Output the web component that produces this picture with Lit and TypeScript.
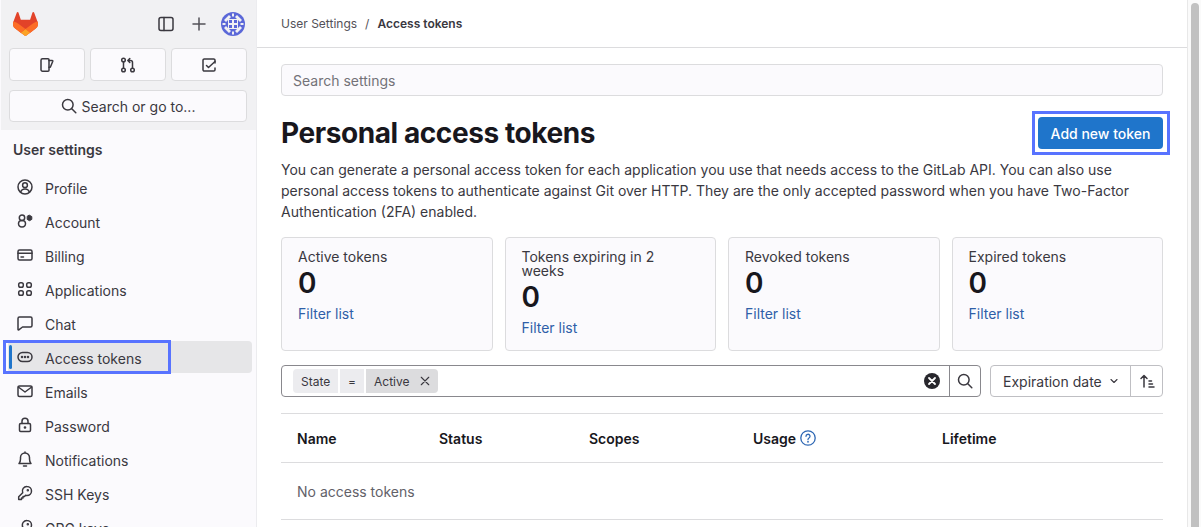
import { LitElement, html, css, svg } from "lit";
import { customElement } from "lit/decorators.js";

const ic = (c: unknown, size = 16) => html`<svg class="ic" width=${size} height=${size} viewBox="0 0 16 16" fill="none" stroke="currentColor" stroke-width="1.5" stroke-linecap="round" stroke-linejoin="round">${c}</svg>`;

const icons: Record<string, unknown> = {
  profile: svg`<circle cx="8" cy="8" r="7"/><circle cx="8" cy="6.2" r="2.4"/><path d="M3.6 13c.7-2 2.4-3 4.4-3s3.700 1 4.400 3"/>`,
  account: svg`<circle cx="5" cy="4.700" r="2.700"/><path d="M5 7.400c2.200 0 3.500 1.300 3.500 3.200S7.200 14 5 14s-3.500-1.500-3.500-3.400S2.800 7.400 5 7.400z"/><path d="M12.500 2.300l2.300 1.300v2.800l-2.300 1.300-2.300-1.300V3.600z" fill="currentColor" stroke-width="1"/>`,
  billing: svg`<rect x="1" y="3" width="14" height="10" rx="1.500"/><path d="M1 6.200h14M4 10h2.500"/>`,
  apps: svg`<rect x="1.700" y="1.700" width="4.600" height="4.600" rx="1.800"/><rect x="9.700" y="1.700" width="4.600" height="4.600" rx="1.800"/><rect x="1.700" y="9.700" width="4.600" height="4.600" rx="1.800"/><rect x="9.700" y="9.700" width="4.600" height="4.600" rx="1.800"/>`,
  chat: svg`<path d="M2.500 2h11A1.500 1.500 0 0 1 15 3.500v7a1.500 1.500 0 0 1-1.500 1.500H5.500L1.800 14.800a.5.5 0 0 1-.8-.4V3.500A1.500 1.500 0 0 1 2.500 2z"/>`,
  token: svg`<rect x="1" y="3.500" width="14" height="9" rx="4.500"/><circle cx="5" cy="8" r=".5" fill="currentColor"/><circle cx="8" cy="8" r=".5" fill="currentColor"/><circle cx="11" cy="8" r=".5" fill="currentColor"/>`,
  mail: svg`<rect x="1" y="3" width="14" height="10.500" rx="1.500"/><path d="M1.300 4l6.700 5 6.700-5"/>`,
  lock: svg`<rect x="2.500" y="6.500" width="11" height="8" rx="1.200"/><path d="M5 6.500V4.300a3 3 0 0 1 6 0v2.200"/><circle cx="8" cy="10.500" r=".6" fill="currentColor"/>`,
  bell: svg`<path d="M2 12.500h12c-1.200-1-1.500-2.300-1.500-4.500V6.500a4.500 4.500 0 0 0-9 0V8c0 2.200-.3 3.500-1.500 4.500zM6.500 15h3M8 1v1"/>`,
  key: svg`<path d="M10 1.500a4.500 4.500 0 0 1 0 9c-.5 0-1-.1-1.400-.2L7.500 11.500H6V13H4.500v1.500H1.700v-2.800l4-4A4.500 4.500 0 0 1 10 1.500z"/><circle cx="10.800" cy="5.200" r=".5" fill="currentColor"/>`,
  search: svg`<circle cx="6.800" cy="6.800" r="5.300"/><path d="M10.800 10.800l4 4"/>`,
  issues: svg`<path d="M3.500 1.800h5.500a1 1 0 0 1 1 1v10.400a1 1 0 0 1-1 1H3.500A1.500 1.500 0 0 1 2 12.700V3.300a1.500 1.500 0 0 1 1.500-1.500z"/><path d="M10 3.500h3.200a.6.600 0 0 1 .6.800L11.300 10.300H10"/>`,
  mr: svg`<circle cx="3.500" cy="3" r="1.800"/><circle cx="3.500" cy="13" r="1.800"/><circle cx="12.500" cy="13" r="1.800"/><path d="M3.500 4.800v6.400M12.500 11.200V5.500A2 2 0 0 0 10.500 3.500H8M9.800 1.500L7.800 3.500l2 2"/>`,
  todo: svg`<path d="M14 6V3.300A1.300 1.300 0 0 0 12.700 2H3.300A1.300 1.300 0 0 0 2 3.300v9.400A1.300 1.300 0 0 0 3.300 14h9.400a1.300 1.300 0 0 0 1.300-1.300V11"/><path d="M5.500 8.500l2 2 6.500-6"/>`,
  panel: svg`<rect x="1" y="1.500" width="14" height="13" rx="2"/><path d="M6 1.500v13"/>`,
  plus: svg`<path d="M8 2v12M2 8h12"/>`,
  chevron: svg`<path d="M4 6l4 4 4-4"/>`,
  sort: svg`<path d="M5 14V2.500M2 5.500l3-3 3 3M10 8h2.500M10 11h3.500M10 14h5"/>`,
  close: svg`<path d="M3 3l10 10M13 3L3 13"/>`,
};

const nav = [
  ["profile", "Profile"],
  ["account", "Account"],
  ["billing", "Billing"],
  ["apps", "Applications"],
  ["chat", "Chat"],
  ["token", "Access tokens"],
  ["mail", "Emails"],
  ["lock", "Password"],
  ["bell", "Notifications"],
  ["key", "SSH Keys"],
  ["key", "GPG keys"],
];

const cards = ["Active tokens", "Tokens expiring in 2 weeks", "Revoked tokens", "Expired tokens"];

@customElement("app-root")
export class AppRoot extends LitElement {
  static styles = css`
    :host { display: block; width: 1201px; height: 527px; overflow: hidden; font-family: Inter, "Liberation Sans", sans-serif; font-size: 14px; color: #3a383f; background: #fff; }
    * { box-sizing: border-box; }
    .ic { display: block; flex: none; }
    .app { display: flex; height: 527px; }
    .side { width: 257px; flex: none; height: 527px; overflow: hidden; background: #fbfafd; border-right: 1px solid #ececef; border-left: 1px solid #fbfafd; }
    .top { height: 130px; background: #f1f1f3; padding: 12px 8px 0 8px; margin-right: 0; }
    .brand { display: flex; align-items: center; height: 24px; margin-bottom: 12px; }
    .logo { margin-left: 4px; }
    .brand .ctl { margin-left: auto; display: flex; align-items: center; color: #3a383f; }
    .ctl .plus { margin-left: 17px; color: #535158; }
    .avatar { margin-left: 14px; margin-right: 3px; }
    .btns { display: grid; grid-template-columns: repeat(3, 76px); gap: 5px; }
    .tbtn { height: 33px; border: 1px solid #dcdcde; border-radius: 4px; background: #fbfafd; display: flex; align-items: center; justify-content: center; }
    .find { margin-top: 9px; height: 32px; width: 238px; border: 1px solid #dcdcde; border-radius: 4px; background: #fbfafd; display: flex; align-items: center; justify-content: center; gap: 5px; }
    .ttl { font-weight: 600; height: 41px; padding: 11px 0 0 12px; line-height: 17px; color: #3a383f; }
    .navs { padding: 0 4px 0 7px; display: flex; flex-direction: column; gap: 2px; }
    .item { position: relative; height: 32px; flex: none; display: flex; align-items: center; gap: 12px; padding-left: 9px; border-radius: 4px; }
    .item span { position: relative; top: 1px; }
    .item.on { background: #e6e6e8; }
    .item.on::before { content: ""; position: absolute; left: 1px; top: 4px; width: 3px; height: 24px; border-radius: 2px; background: #1f75cb; }
    .focus { position: absolute; left: -5px; top: -1px; width: 168px; height: 34px; border: 3px solid #5873ff; pointer-events: none; }
    .main { width: 930px; flex: none; height: 527px; overflow: hidden; }
    .crumbs { height: 48px; border-bottom: 1px solid #dcdcde; padding: 0 24px; display: flex; align-items: center; font-size: 12px; gap: 8px; color: #535158; }
    .crumbs b { font-weight: 600; color: #3a383f; }
    .content { padding: 16px 24px 0; }
    .sinput { height: 32px; border: 1px solid #dcdcde; border-radius: 4px; background: #fbfafd; color: #737278; display: flex; align-items: center; padding: 0 11px; }
    .head { display: flex; justify-content: space-between; align-items: center; margin-top: 21px; height: 32px; }
    h1 { margin: 0; font-size: 28px; line-height: 32px; font-weight: 700; color: #18171d; letter-spacing: -0.015em; }
    .add { position: relative; width: 125px; height: 32px; background: #1f75cb; color: #fff; border-radius: 4px; display: flex; align-items: center; justify-content: center; font-weight: 500; }
    .add::after { content: ""; position: absolute; left: -6px; right: -7px; top: -6px; bottom: -6px; border: 3px solid #5873ff; }
    p { margin: 10px 0 15px; line-height: 21px; color: #3a383f; }
    .cards { display: grid; grid-template-columns: repeat(4, 1fr); gap: 12px; height: 112px; }
    .card { border: 1px solid #dcdcde; border-radius: 4px; background: #fbfafd; padding: 12px 16px; }
    .card .t { line-height: 14px; }
    .card .n { font-size: 28px; font-weight: 600; line-height: 38px; color: #18171d; }
    .card a { display: block; line-height: 20px; margin-top: 2px; color: #2f5fa8; }
    .fil { display: flex; margin-top: 16px; height: 32px; }
    .bar { width: 700px; border: 1px solid #89888d; border-radius: 4px; display: flex; align-items: center; padding-left: 11px; }
    .chip { height: 24px; display: flex; align-items: center; background: #ececef; font-size: 12px; margin-right: 2px; padding: 0 8px; }
    .chip.a { border-radius: 4px 0 0 4px; width: 45px; }
    .chip.b { width: 24px; justify-content: center; }
    .chip.c { background: #dcdcde; border-radius: 0 4px 4px 0; width: 72px; gap: 10px; color: #3a383f; }
    .clear { margin-left: auto; margin-right: 9px; }
    .sbtn { width: 31px; height: 100%; border-left: 1px solid #89888d; display: flex; align-items: center; justify-content: center; }
    .sortg { width: 173px; margin-left: 9px; border: 1px solid #bfbfc3; border-radius: 4px; display: flex; align-items: center; }
    .sortg .lbl { width: 140px; height: 100%; border-right: 1px solid #bfbfc3; display: flex; align-items: center; padding-left: 12px; gap: 6px; }
    .sortg .dir { flex: 1; display: flex; align-items: center; justify-content: center; }
    .tbl { margin-top: 16px; border-top: 1px solid #dcdcde; }
    .row { display: grid; grid-template-columns: 142px 150px 164px 189px 1fr; border-bottom: 1px solid #dcdcde; }
    .row.h { height: 49px; align-items: center; font-weight: 600; color: #18171d; }
    .row.h > div { padding-left: 16px; display: flex; align-items: center; gap: 4px; }
    .row.h svg { color: #2f68b4; }
    .empty { height: 57px; display: flex; align-items: center; padding-left: 16px; color: #626168; border-bottom: 1px solid #dcdcde; }
    .scroll { width: 14px; flex: none; height: 527px; background: #fafafa; border-left: 1px solid #e8e8e8; padding: 3px 3px 0 3px; }
    .thumb { height: 600px; width: 8px; border-radius: 4px; background: #c1c1c1; }
  `;

  render() {
    return html`<div class="app">
      <aside class="side">
        <div class="top">
          <div class="brand">
            <svg class="logo" width="25" height="24" viewBox="0 0 25 24">
              <path fill="#E24329" d="m24.507 9.5-.034-.09L21.082.562a.896.896 0 0 0-1.694.091l-2.29 7.01H7.825L5.535.653a.898.898 0 0 0-1.694-.09L.451 9.411.416 9.5a6.297 6.297 0 0 0 2.09 7.278l.012.01.03.022 5.16 3.867 2.56 1.935 1.554 1.176a1.051 1.051 0 0 0 1.268 0l1.555-1.176 2.56-1.935 5.197-3.89.014-.01A6.297 6.297 0 0 0 24.507 9.5Z"/>
              <path fill="#FC6D26" d="m24.507 9.5-.034-.09a11.44 11.44 0 0 0-4.56 2.051l-7.447 5.632 4.742 3.584 5.197-3.89.014-.01A6.297 6.297 0 0 0 24.507 9.5Z"/>
              <path fill="#FCA326" d="m7.707 20.677 2.56 1.935 1.555 1.176a1.051 1.051 0 0 0 1.268 0l1.555-1.176 2.56-1.935-4.743-3.584-4.755 3.584Z"/>
              <path fill="#FC6D26" d="M5.01 11.461a11.43 11.43 0 0 0-4.56-2.05L.416 9.5a6.297 6.297 0 0 0 2.09 7.278l.012.01.03.022 5.16 3.867 4.745-3.584-7.444-5.632Z"/>
            </svg>
            <div class="ctl">
              ${ic(icons.panel)}
              <span class="plus">${ic(icons.plus)}</span>
              <svg class="avatar" width="24" height="24" viewBox="0 0 24 24">
                <circle cx="12" cy="12" r="12" fill="#5b68d8"/>
                <g fill="#f1f1f3">
                  <path d="M3 8l5-5 2 2-5 5zM21 8l-5-5-2 2 5 5zM3 16l5 5 2-2-5-5zM21 16l-5 5-2-2 5-5z"/>
                  <rect x="7" y="7" width="10" height="10"/>
                </g>
                <g fill="#5b68d8">
                  <rect x="8" y="8" width="3" height="3"/><rect x="13" y="8" width="3" height="3"/>
                  <rect x="8" y="13" width="3" height="3"/><rect x="13" y="13" width="3" height="3"/>
                </g>
                <g fill="#f1f1f3">
                  <rect x="11" y="1.500" width="2" height="3"/><rect x="11" y="19.500" width="2" height="3"/>
                  <rect x="1.500" y="11" width="3" height="2"/><rect x="19.500" y="11" width="3" height="2"/>
                </g>
              </svg>
            </div>
          </div>
          <div class="btns">
            <div class="tbtn">${ic(icons.issues)}</div>
            <div class="tbtn">${ic(icons.mr)}</div>
            <div class="tbtn">${ic(icons.todo)}</div>
          </div>
          <div class="find">${ic(icons.search)}<span>Search or go to...</span></div>
        </div>
        <div class="ttl">User settings</div>
        <div class="navs">
          ${nav.map(([i, t]) => html`<div class="item ${t === "Access tokens" ? "on" : ""}">${ic(icons[i])}<span>${t}</span>${t === "Access tokens" ? html`<div class="focus"></div>` : ""}</div>`)}
        </div>
      </aside>
      <main class="main">
        <div class="crumbs"><span>User Settings</span><span>/</span><b>Access tokens</b></div>
        <div class="content">
          <div class="sinput">Search settings</div>
          <div class="head"><h1>Personal access tokens</h1><div class="add">Add new token</div></div>
          <p>You can generate a personal access token for each application you use that needs access to the GitLab API. You can also use personal access tokens to authenticate against Git over HTTP. They are the only accepted password when you have Two-Factor Authentication (2FA) enabled.</p>
          <div class="cards">
            ${cards.map((c) => html`<div class="card"><div class="t">${c}</div><div class="n">0</div><a>Filter list</a></div>`)}
          </div>
          <div class="fil">
            <div class="bar">
              <div class="chip a">State</div><div class="chip b">=</div>
              <div class="chip c">Active ${ic(icons.close, 12)}</div>
              <svg class="clear" width="16" height="16" viewBox="0 0 16 16"><circle cx="8" cy="8" r="8" fill="#28272d"/><path d="M5 5l6 6M11 5l-6 6" stroke="#fff" stroke-width="1.800" stroke-linecap="round"/></svg>
              <div class="sbtn">${ic(icons.search)}</div>
            </div>
            <div class="sortg">
              <div class="lbl">Expiration date ${ic(icons.chevron, 12)}</div>
              <div class="dir">${ic(icons.sort)}</div>
            </div>
          </div>
          <div class="tbl">
            <div class="row h">
              <div>Name</div><div>Status</div><div>Scopes</div>
              <div>Usage <svg width="16" height="16" viewBox="0 0 16 16" fill="none" stroke="currentColor" stroke-width="1.300" stroke-linecap="round"><circle cx="8" cy="8" r="7.200"/><path d="M6 6.300a2 2 0 1 1 3 1.700c-.7.400-1 .8-1 1.500"/><circle cx="8" cy="11.800" r=".3" fill="currentColor"/></svg></div>
              <div>Lifetime</div>
            </div>
            <div class="empty">No access tokens</div>
          </div>
        </div>
      </main>
      <div class="scroll"><div class="thumb"></div></div>
    </div>`;
  }
}
